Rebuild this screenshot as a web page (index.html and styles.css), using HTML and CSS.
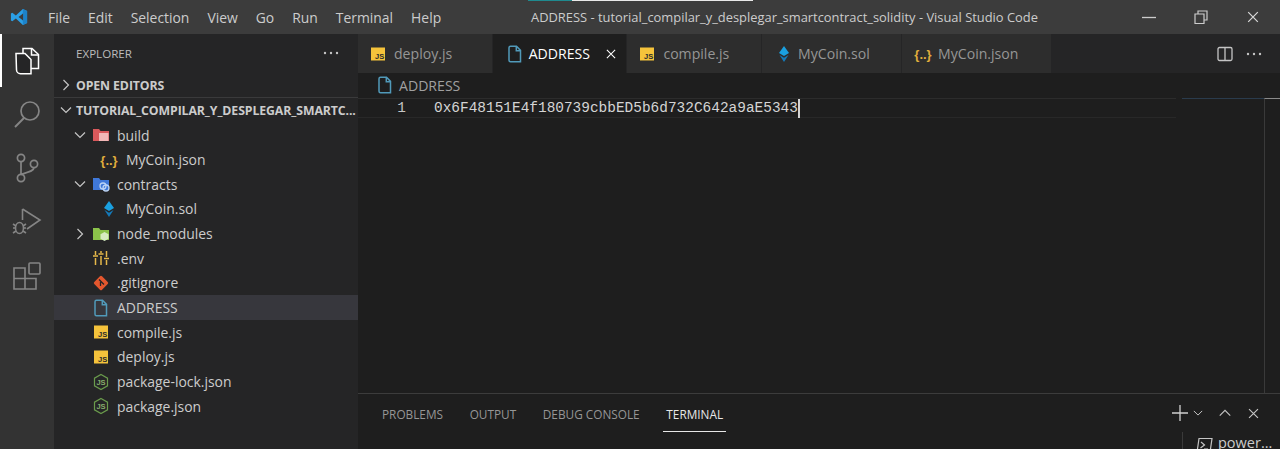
FILE: index.html
```html
<!DOCTYPE html>
<html lang="en">
<head>
<meta charset="utf-8">
<title>ADDRESS - Visual Studio Code</title>
<link rel="stylesheet" href="styles.css">
</head>
<body>
<svg class="sprite" aria-hidden="true">
  <symbol id="i-file" viewBox="0 0 16 18"><path d="M3.500 1.200h6l4 4.200v11.300h-10a1.500 1.500 0 0 1-1.500-1.500V2.700a1.500 1.500 0 0 1 1.500-1.500zM9.300 1.500v4.200h4.200" fill="none" stroke="#519aba" stroke-width="1.500"/></symbol>
  <symbol id="i-js" viewBox="0 0 16 16"><rect x="1" y="1.500" width="14" height="13" fill="#f5c33b"/><text x="14.300" y="13" text-anchor="end" font-family="Liberation Sans" font-weight="700" font-size="7.500" fill="#2b2b2b">JS</text></symbol>
  <symbol id="i-json" viewBox="0 0 18 16"><text x="9" y="12.500" text-anchor="middle" font-family="Liberation Sans" font-weight="700" font-size="13" fill="#e0ae3c">{..}</text></symbol>
  <symbol id="i-sol" viewBox="0 0 12 18"><path d="M6 1 11 8 6 11 1 8z" fill="#1aa0e0"/><path d="M1.500 10 6 12.800 10.500 10 6 17z" fill="#1479b8"/></symbol>
  <symbol id="i-node" viewBox="0 0 16 18"><path d="M8 1.500 14.500 5.200v7.600L8 16.500 1.500 12.800V5.200z" fill="none" stroke="#6a9b4c" stroke-width="1.200"/><text x="8" y="12" text-anchor="middle" font-family="Liberation Sans" font-weight="700" font-size="7.500" fill="#87ad6c">JS</text></symbol>
  <symbol id="i-chev" viewBox="0 0 16 16"><path d="M3 5.500l5 5 5-5" fill="none" stroke="#c5c5c5" stroke-width="1.200"/></symbol>
  <symbol id="i-chevr" viewBox="0 0 16 16"><path d="M5.500 3l5 5-5 5" fill="none" stroke="#c5c5c5" stroke-width="1.200"/></symbol>
  <symbol id="i-close" viewBox="0 0 16 16"><path d="M2.500 2.500l11 11M13.500 2.500l-11 11" fill="none" stroke="currentColor" stroke-width="1.400"/></symbol>
  <symbol id="i-dots" viewBox="0 0 16 4"><circle cx="2" cy="2" r="1.200" fill="#c5c5c5"/><circle cx="8" cy="2" r="1.200" fill="#c5c5c5"/><circle cx="14" cy="2" r="1.200" fill="#c5c5c5"/></symbol>
</svg>
<div class="app">
  <header class="titlebar">
    <div class="progress"><span class="prog-teal"></span><span class="prog-white"></span></div>
    <svg class="logo" width="18" height="18" viewBox="0 0 20 20"><path d="M14.300 1 19 3.200v13.600L14.300 19 6.500 11.700 2.600 14.800 1 14V6l1.600-.8 3.900 3.100z" fill="#2b9fe6"/><path d="M14.300 1 19 3.200v13.600L14.300 19z" fill="#1d82c8"/><path d="M14.500 6 9.500 10l5 4z" fill="#3c3c3c"/></svg>
    <nav class="menu"><span>File</span><span>Edit</span><span>Selection</span><span>View</span><span>Go</span><span>Run</span><span>Terminal</span><span>Help</span></nav>
    <div class="wintitle">ADDRESS - tutorial_compilar_y_desplegar_smartcontract_solidity - Visual Studio Code</div>
    <div class="winctl">
      <svg width="14" height="14" viewBox="0 0 14 14"><path d="M0 7.500h14" stroke="#cccccc" stroke-width="1.300"/></svg>
      <svg width="14" height="14" viewBox="0 0 14 14"><path d="M1 4h9v9.500H1zM4 4V1h9v9h-3" fill="none" stroke="#cccccc" stroke-width="1.200"/></svg>
      <svg class="wclose" width="14" height="14" viewBox="0 0 16 16"><use href="#i-close"/></svg>
    </div>
  </header>
  <div class="main">
    <aside class="activity">
      <div class="act act-on">
        <svg width="26" height="28" viewBox="0 0 26 28"><path d="M9 6.500V1.500h9l6.500 6v14H17" fill="none" stroke="#fff" stroke-width="1.500"/><path d="M17.500 1.500v6.500h7" fill="none" stroke="#fff" stroke-width="1.500"/><path d="M2 6.500h9l6 6v14.200H6.500a4 4 0 0 1-4-4z" fill="#252526" stroke="#fff" stroke-width="1.500"/></svg>
      </div>
      <div class="act">
        <svg width="28" height="28" viewBox="0 0 28 28"><circle cx="17" cy="11" r="9" fill="none" stroke="#858585" stroke-width="1.700"/><path d="M11 18 2 27" stroke="#858585" stroke-width="1.900"/></svg>
      </div>
      <div class="act">
        <svg width="24" height="30" viewBox="0 0 24 30"><g fill="none" stroke="#858585" stroke-width="1.700"><circle cx="6" cy="5" r="3.600"/><circle cx="6" cy="25" r="3.600"/><circle cx="19" cy="11" r="3.600"/><path d="M6 8.600v12.800M19 14.600c0 3.400-5 4.400-13 6.800"/></g></svg>
      </div>
      <div class="act">
        <svg width="30" height="30" viewBox="0 0 30 30"><g fill="none" stroke="#858585" stroke-width="1.600"><path d="M10.500 2 28 13 15 22"/><path d="M10.500 2v11"/><ellipse cx="7.500" cy="21" rx="4" ry="5.500"/><path d="M1 17l3 2M1 21h3M1 26l3-2M14 17l-3 2M14 21h-3M14 26l-3-2"/></g></svg>
      </div>
      <div class="act">
        <svg width="28" height="28" viewBox="0 0 28 28"><g fill="none" stroke="#858585" stroke-width="1.600"><path d="M1 6h11v21H1zM1 16.500h22V27H1zM12 16.500V27"/><rect x="16" y="1" width="11" height="11" rx="1"/></g></svg>
      </div>
    </aside>
    <aside class="sidebar">
      <div class="side-head"><span>EXPLORER</span><svg width="16" height="4"><use href="#i-dots"/></svg></div>
      <div class="section sec-open"><svg class="ch" width="16" height="16"><use href="#i-chevr"/></svg><b>OPEN EDITORS</b></div>
      <div class="section sec-proj"><svg class="ch" width="16" height="16"><use href="#i-chev"/></svg><b>TUTORIAL_COMPILAR_Y_DESPLEGAR_SMARTC...</b></div>
      <ul class="tree">
        <li class="row lv1"><svg class="ch" width="16" height="16"><use href="#i-chev"/></svg>
          <svg class="ic" width="18" height="16" viewBox="0 0 18 16"><path d="M1 2h6l1.500 2H17v10H1z" fill="#d9595c"/><path d="M7 6h9.500v8H7z" fill="#f2b8b8"/></svg><span>build</span></li>
        <li class="row lv2"><svg class="ic" width="18" height="16"><use href="#i-json"/></svg><span>MyCoin.json</span></li>
        <li class="row lv1"><svg class="ch" width="16" height="16"><use href="#i-chev"/></svg>
          <svg class="ic" width="18" height="16" viewBox="0 0 18 16"><path d="M1 2h6l1.500 2H17v10H1z" fill="#3f78d9"/><circle cx="11" cy="10" r="3" fill="none" stroke="#b9d2f5" stroke-width="1.300"/><circle cx="14" cy="12" r="3" fill="none" stroke="#b9d2f5" stroke-width="1.300"/></svg><span>contracts</span></li>
        <li class="row lv2"><svg class="ic" width="18" height="18" viewBox="-3 0 18 18"><use href="#i-sol" width="12" height="18"/></svg><span>MyCoin.sol</span></li>
        <li class="row lv1"><svg class="ch" width="16" height="16"><use href="#i-chevr"/></svg>
          <svg class="ic" width="18" height="16" viewBox="0 0 18 16"><path d="M1 2h6l1.500 2H17v10H1z" fill="#8bc34a"/><path d="M12.500 6 16.500 8.300v4.400L12.500 15 8.500 12.700V8.300z" fill="#d6ecc0"/></svg><span>node_modules</span></li>
        <li class="row lv1 nochev"><svg class="ic" width="18" height="18" viewBox="0 0 18 18"><g stroke="#e5b84a" stroke-width="1.500" fill="none"><path d="M3.500 2v4M3.500 9v7M9 2v2M9 7v9M14.500 2v6M14.500 11v5M1 7h5M6.500 5h5M12 9.500h5"/></g></svg><span>.env</span></li>
        <li class="row lv1 nochev"><svg class="ic" width="18" height="18" viewBox="0 0 18 18"><rect x="3.500" y="3.500" width="11" height="11" rx="1.500" transform="rotate(45 9 9)" fill="#e4572e"/><path d="M7 5.500l5 5M8.500 8v4" stroke="#252526" stroke-width="1.300"/></svg><span>.gitignore</span></li>
        <li class="row lv1 nochev selected"><svg class="ic" width="18" height="18"><use href="#i-file"/></svg><span>ADDRESS</span></li>
        <li class="row lv1 nochev"><svg class="ic ic16" width="16" height="16"><use href="#i-js"/></svg><span>compile.js</span></li>
        <li class="row lv1 nochev"><svg class="ic ic16" width="16" height="16"><use href="#i-js"/></svg><span>deploy.js</span></li>
        <li class="row lv1 nochev"><svg class="ic ic16" width="16" height="18"><use href="#i-node"/></svg><span>package-lock.json</span></li>
        <li class="row lv1 nochev"><svg class="ic ic16" width="16" height="18"><use href="#i-node"/></svg><span>package.json</span></li>
      </ul>
    </aside>
    <section class="workspace">
      <div class="tabs">
        <div class="tab t135"><svg width="16" height="16"><use href="#i-js"/></svg><span>deploy.js</span></div>
        <div class="tab t135 active"><svg width="16" height="18"><use href="#i-file"/></svg><span>ADDRESS</span><svg class="tclose" width="12" height="12" viewBox="0 0 16 16"><use href="#i-close"/></svg></div>
        <div class="tab t135"><svg width="16" height="16"><use href="#i-js"/></svg><span>compile.js</span></div>
        <div class="tab tsol"><svg width="12" height="18"><use href="#i-sol"/></svg><span>MyCoin.sol</span></div>
        <div class="tab tjson"><svg width="18" height="16"><use href="#i-json"/></svg><span>MyCoin.json</span></div>
        <div class="tab-actions">
          <svg width="16" height="16" viewBox="0 0 16 16"><rect x="1" y="1.500" width="14" height="13" rx="1.500" fill="none" stroke="#c5c5c5" stroke-width="1.300"/><path d="M8 1.500v13" stroke="#c5c5c5" stroke-width="1.300"/></svg>
          <svg width="16" height="4"><use href="#i-dots"/></svg>
        </div>
      </div>
      <div class="crumbs"><svg width="16" height="18"><use href="#i-file"/></svg><span>ADDRESS</span></div>
      <div class="editor">
        <div class="line"><span class="ln">1</span><code class="code">0x6F48151E4f180739cbbED5b6d732C642a9aE5343</code><i class="caret"></i></div>
        <div class="minimap"></div>
        <div class="scroll"></div>
      </div>
      <div class="panel">
        <nav class="ptabs"><span>PROBLEMS</span><span>OUTPUT</span><span>DEBUG CONSOLE</span><span class="pon">TERMINAL</span></nav>
        <div class="pactions">
          <svg width="16" height="16" viewBox="0 0 16 16"><path d="M0 8h16M8 0v16" stroke="#d0d0d0" stroke-width="1.300"/></svg>
          <svg class="small" width="10" height="10" viewBox="2 2 12 12"><use href="#i-chev" width="16" height="16"/></svg>
          <svg width="14" height="14" viewBox="0 0 16 16"><path d="M2 11l6-6 6 6" fill="none" stroke="#c5c5c5" stroke-width="1.300"/></svg>
          <svg class="pclose" width="13" height="13" viewBox="0 0 16 16"><use href="#i-close"/></svg>
        </div>
        <div class="tlist">
          <svg width="17" height="17" viewBox="0 0 17 17"><path d="M3 1.500h13l-2 14H1z" fill="none" stroke="#c5c5c5" stroke-width="1.200"/><path d="M5 5l3.500 3L4.500 11M8 12h4" fill="none" stroke="#c5c5c5" stroke-width="1.200"/></svg>
          <span class="tname">power...</span>
        </div>
      </div>
    </section>
  </div>
</div>
</body>
</html>
```
FILE: styles.css
```css
* { box-sizing: border-box; }
html, body { margin: 0; padding: 0; background: #1e1e1e; }
body { font-family: "Open Sans", "Noto Sans", sans-serif; color: #cccccc; }
.sprite { display: none; }
.app { width: 1280px; height: 449px; overflow: hidden; display: flex; flex-direction: column; }

.titlebar { height: 34px; flex: none; background: #3c3c3c; display: flex; align-items: center; position: relative; font-size: 13.900px; }
.progress { position: absolute; top: 0; left: 528px; display: flex; height: 1px; }
.prog-teal { width: 44px; background: #1f8a8f; }
.prog-white { width: 181px; background: #e8e8e8; }
.logo { margin-left: 10px; flex: none; }
.menu { display: flex; gap: 18px; margin-left: 20px; }
.menu span { color: #cccccc; }
.wintitle { position: absolute; left: 531px; top: 8px; width: 520px; color: #cccccc; white-space: nowrap; font-size: 12.900px; }
.winctl { margin-left: auto; display: flex; align-items: center; gap: 38px; padding-right: 20px; }
.wclose { color: #d8d8d8; }

.main { flex: 1; display: flex; min-height: 0; }
.activity { width: 54px; flex: none; background: #333333; display: flex; flex-direction: column; }
.act { height: 54px; display: flex; align-items: center; justify-content: center; }
.act-on { border-left: 2px solid #ffffff; height: 53px; padding-right: 3px; }

.sidebar { width: 304px; flex: none; background: #252526; display: flex; flex-direction: column; font-size: 13.950px; }
.side-head { height: 39px; flex: none; display: flex; align-items: center; justify-content: space-between; padding: 0 19px 0 22px; font-size: 11.600px; color: #bbbbbb; }
.side-head svg { margin-bottom: 1px; }
.section { display: flex; align-items: center; font-size: 12.300px; color: #cccccc; flex: none; }
.section b { font-weight: 700; margin-left: 2px; white-space: nowrap; letter-spacing: -0.1px; }
.sec-open { height: 24px; padding-left: 4px; }
.sec-proj { height: 25.700px; border-top: 1px solid #3a3a3b; padding-left: 4px; }
.tree { list-style: none; margin: 0; padding: 0; }
.row { height: 24.660px; display: flex; align-items: center; color: #cccccc; white-space: nowrap; }
.lv1 { padding-left: 18px; }
.lv1.nochev { padding-left: 38px; }
.lv2 { padding-left: 46px; }
.row .ch { flex: none; margin-right: 4px; }
.row .ic { flex: none; margin-right: 7px; }
.lv2 .ic { margin-right: 8px; }
.row .ic16 { margin-left: 1px; margin-right: 8px; }
.selected { background: #37373d; }

.workspace { flex: 1; min-width: 0; display: flex; flex-direction: column; background: #1e1e1e; }
.tabs { height: 39px; flex: none; display: flex; background: #252526; font-size: 14.100px; }
.tab { display: flex; align-items: center; gap: 8px; background: #2d2d2d; color: #969696; border-right: 1px solid #252526; padding-left: 12px; }
.t135 { width: 134.700px; }
.tsol { width: 140px; padding-left: 16px; gap: 8px; }
.tjson { width: 150px; padding-left: 12px; gap: 6px; }
.tab.active { background: #1e1e1e; color: #ffffff; padding-left: 14px; gap: 6px; position: relative; }
.tclose { color: #ffffff; margin-left: 9px; }
.tab-actions { margin-left: auto; display: flex; align-items: center; gap: 13px; padding-right: 18px; }

.crumbs { height: 24px; flex: none; display: flex; align-items: center; gap: 6px; padding-left: 19px; font-size: 14.100px; color: #a0a0a0; }

.editor { flex: 1; min-height: 0; position: relative; margin-top: 1px; }
.line { height: 18px; margin-right: 104px; border-top: 1px solid #2c2c2c; border-bottom: 1px solid #282828; display: flex; align-items: center; box-sizing: content-box; }
.ln { width: 76px; padding-right: 28px; text-align: right; flex: none; font: 14.400px "Liberation Mono", monospace; color: #c6c6c6; }
.code { font: 14.450px "Liberation Mono", monospace; color: #d4d4d4; white-space: pre; }
.caret { width: 2px; height: 19px; background: #d4d4d4; }
.minimap { position: absolute; left: 824px; top: 0; width: 82px; height: 1px; background: #2a3b4c; }
.scroll { position: absolute; left: 906px; top: 0; bottom: 0; width: 16px; border-left: 1px solid #3a3a3a; border-top: 1px solid #8a8a8a; }

.panel { height: 56px; flex: none; border-top: 1px solid #3c3c3c; position: relative; display: flex; align-items: flex-start; background: #1e1e1e; }
.ptabs { display: flex; gap: 26.700px; padding-left: 24px; font-size: 11.800px; color: #969696; height: 38px; }
.ptabs span { height: 37.500px; padding-top: 12px; position: relative; }
.ptabs .pon { color: #e7e7e7; border-bottom: 1px solid #e7e7e7; padding-left: 3px; padding-right: 3px; margin-left: -3px; }
.pactions { margin-left: auto; display: flex; align-items: center; height: 38px; padding-right: 20px; }
.pactions .small { margin-left: 5px; margin-right: 15px; }
.pactions .pclose { margin-left: 15px; color: #c5c5c5; }
.tlist { position: absolute; left: 824px; top: 38px; bottom: 0; width: 98px; border-left: 1px solid #3a3a3a; display: flex; align-items: flex-start; gap: 5px; padding: 5px 0 0 13px; font-size: 14.500px; color: #cccccc; }
.tname { line-height: 12px; margin-top: 0; }
```
